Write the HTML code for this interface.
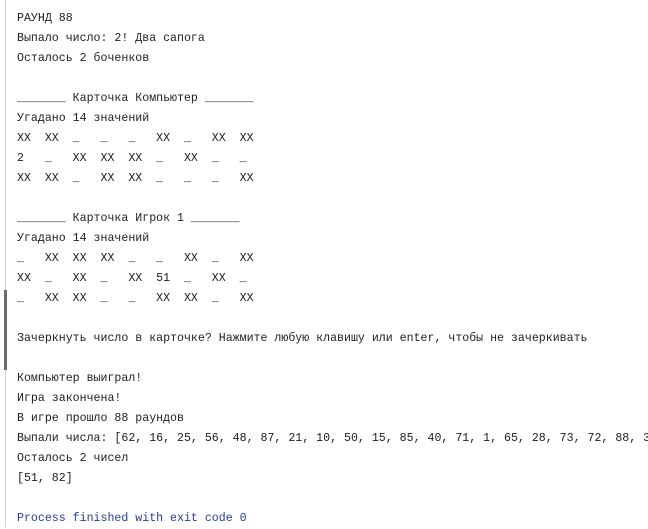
<!DOCTYPE html>
<html><head><meta charset="utf-8"><style>
html,body{margin:0;padding:0;background:#fff;width:648px;height:527px;overflow:hidden}
.b{position:absolute;left:5px;top:0;width:1px;height:527px;background:#d0d0d0}
.t{position:absolute;left:4px;top:290px;width:3px;height:80px;background:#6a6a6a}
pre{position:absolute;left:17px;top:9px;margin:0;font-family:"Liberation Mono","DejaVu Sans Mono",monospace;font-size:11.6px;line-height:20px;color:#1e1e1e;white-space:pre}
.p{color:#2a3b9c}
</style></head><body>
<div class="b"></div><div class="t"></div>
<pre>РАУНД 88
Выпало число: 2! Два сапога
Осталось 2 боченков

_______ Карточка Компьютер _______
Угадано 14 значений
XX  XX  _   _   _   XX  _   XX  XX
2   _   XX  XX  XX  _   XX  _   _
XX  XX  _   XX  XX  _   _   _   XX

_______ Карточка Игрок 1 _______
Угадано 14 значений
_   XX  XX  XX  _   _   XX  _   XX
XX  _   XX  _   XX  51  _   XX  _
_   XX  XX  _   _   XX  XX  _   XX

Зачеркнуть число в карточке? Нажмите любую клавишу или enter, чтобы не зачеркивать

Компьютер выиграл!
Игра закончена!
В игре прошло 88 раундов
Выпали числа: [62, 16, 25, 56, 48, 87, 21, 10, 50, 15, 85, 40, 71, 1, 65, 28, 73, 72, 88, 3
Осталось 2 чисел
[51, 82]

<span class="p">Process finished with exit code 0</span></pre>
</body></html>
